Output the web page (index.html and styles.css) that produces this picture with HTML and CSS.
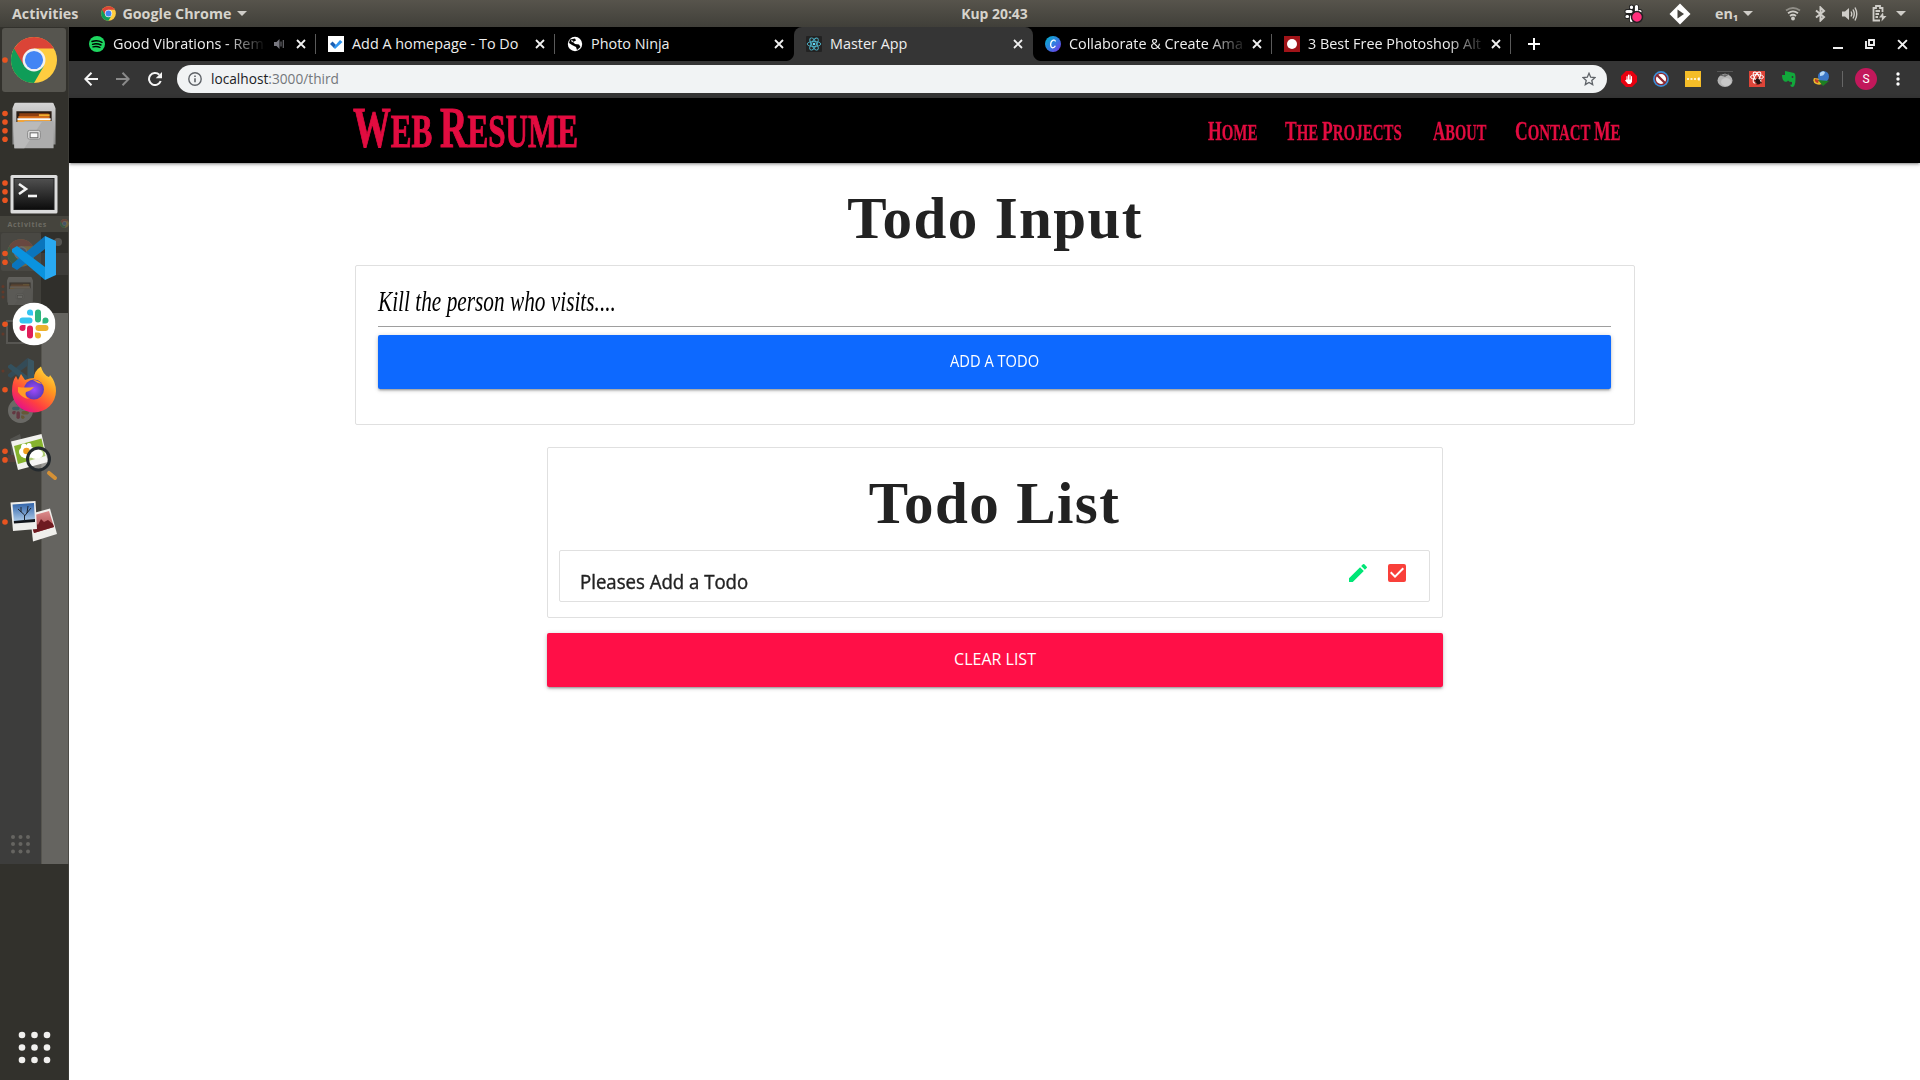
FILE: index.html
```
<!DOCTYPE html>
<html lang="en">
<head>
<meta charset="utf-8">
<title>Master App</title>
<link rel="stylesheet" href="styles.css">
</head>
<body>
<svg class="defs" width="0" height="0">
  <defs>
    <linearGradient id="steel" x1="0" y1="0" x2="0" y2="1"><stop offset="0" stop-color="#d6d6d6"/><stop offset="1" stop-color="#8c8c8c"/></linearGradient>
    <linearGradient id="screen" x1="0" y1="0" x2="0" y2="1"><stop offset="0" stop-color="#505050"/><stop offset="1" stop-color="#0c0c0c"/></linearGradient>
    <linearGradient id="fox" x1="1" y1="0" x2="0.3" y2="1"><stop offset="0" stop-color="#fff44f"/><stop offset=".4" stop-color="#ff9a1f"/><stop offset=".75" stop-color="#ff4040"/><stop offset="1" stop-color="#e5108a"/></linearGradient>
    <radialGradient id="globe"><stop offset="0" stop-color="#a04bff"/><stop offset="1" stop-color="#5b3bbd"/></radialGradient>
    <linearGradient id="sky" x1="0" y1="0" x2="0" y2="1"><stop offset="0" stop-color="#2f62a8"/><stop offset="1" stop-color="#b9d5ee"/></linearGradient>
    <linearGradient id="rose" x1="0" y1="0" x2="0" y2="1"><stop offset="0" stop-color="#dc8c8c"/><stop offset="1" stop-color="#a03c40"/></linearGradient>
    <linearGradient id="canva" x1="0" y1="0" x2="1" y2="1"><stop offset="0" stop-color="#00b4cc"/><stop offset=".5" stop-color="#2f80e0"/><stop offset="1" stop-color="#7d2ae8"/></linearGradient>
    <symbol id="chrome" viewBox="0 0 48 48">
      <circle cx="24" cy="24" r="23.5" fill="#ffcd40"/>
      <path d="M24 24 3.650 12.250A23.500 23.500 0 0 0 24 47.500L34.200 29.900Z" fill="#0f9d58"/>
      <path d="M24 12.300H44.400A23.500 23.500 0 0 0 3.650 12.250L13.800 29.900 24 24Z" fill="#db4437"/>
      <circle cx="24" cy="24" r="11.700" fill="#f1f1f1"/><circle cx="24" cy="24" r="9.300" fill="#4285f4"/>
    </symbol>
    <symbol id="files" viewBox="0 0 44 47">
      <path d="M2 1Q2 0 4 0H40Q42 0 42 1L44 6V43H0V6Z" fill="url(#steel)"/>
      <path d="M4 9H40V22H4Z" fill="#2a1c14"/>
      <path d="M7 11H37V21H7Z" fill="#8f3f10"/><path d="M27 12H38V14H27Z" fill="#f0b030"/><path d="M6 14H38V16H6Z" fill="#d9701c"/><path d="M5 16H39V18H5Z" fill="#fff"/><path d="M5 18H39V21H5Z" fill="#f0a43c"/>
      <path d="M1 20H11L13 19H42V47H2Z" fill="#acacac"/><path d="M1 20H30L12 47H2Z" fill="#bababa"/>
      <rect x="15.500" y="28.500" width="13" height="9" rx="2" fill="#ddd" stroke="#888"/><rect x="18" y="31" width="8" height="5" fill="#fafafa" stroke="#666"/>
    </symbol>
    <symbol id="code" viewBox="0 0 44 44">
      <path d="M33 0 44 5V39L33 44Z" fill="#29a9f2"/><path d="M33 0V13L5 34 0 31V28Z" fill="#0a75bd"/><path d="M33 44V31L5 10 0 13V16Z" fill="#0a93df"/>
    </symbol>
    <symbol id="slack" viewBox="0 0 43 43">
      <circle cx="21.500" cy="21.500" r="21.500" fill="#fff"/>
      <g stroke-width="6" stroke-linecap="round"><path d="M10 18H17" stroke="#36c5f0"/><path d="M25.500 10V17" stroke="#2eb67d"/><path d="M26 25.500H33" stroke="#ecb22e"/><path d="M17.500 26V33" stroke="#e01e5a"/></g>
      <path d="M20.500 13H17.500A3 3 0 1 1 20.500 10Z" fill="#36c5f0"/><path d="M30 21V18A3 3 0 1 1 33 21Z" fill="#2eb67d"/><path d="M22.500 30H25.500A3 3 0 1 1 22.500 33Z" fill="#ecb22e"/><path d="M13 22.500V25.500A3 3 0 1 1 10 22.500Z" fill="#e01e5a"/>
    </symbol>
    <symbol id="x" viewBox="0 0 10 10"><path d="M1 1 9 9M9 1 1 9" fill="none" stroke="#f1f1f1" stroke-width="1.800"/></symbol>
  </defs>
</svg>

<header class="panel">
  <div class="panel-left">
    <span>Activities</span>
    <svg class="panel-chrome" width="15" height="15"><use href="#chrome"/></svg>
    <span class="app-name">Google Chrome</span>
    <i class="caret"></i>
  </div>
  <div class="clock">Kup 20:43</div>
  <div class="panel-right">
    <svg width="20" height="20" viewBox="0 0 20 20"><g stroke="#222" stroke-width="5" stroke-linecap="round"><path d="M3 7.500H7M7.500 3V7M12.500 3V7M13 7.500H16M3 12.500H7M7.500 13V16"/></g><g stroke="#fff" stroke-width="3.200" stroke-linecap="round"><path d="M3 7.500H7M7.500 3V3.500M12.500 2.500V7M15.500 7.500H16M3 12.500H3.500M7.500 12.500V16.500"/></g><circle cx="13" cy="13" r="5.500" fill="#ff2f7c" stroke="#222" stroke-width="1.500"/></svg>
    <svg class="diamond" width="22" height="22" viewBox="0 0 22 22"><path d="M11 .5 21.500 11 11 21.500.500 11Z" fill="#fff"/><path d="M8.500 6.500 15 11 8.500 15.500Z" fill="#45433d"/></svg>
    <span class="lang">en₁</span><i class="caret"></i>
    <svg class="wifi" width="16" height="15" viewBox="0 0 16 15"><g fill="none" stroke="#cfcdc8" stroke-width="1.800"><path d="M1 4.500Q8-.500 15 4.500" opacity=".5"/><path d="M3 7.300Q8 3.500 13 7.300"/><path d="M5 10Q8 7.600 11 10"/></g><circle cx="8" cy="12.500" r="1.900" fill="#cfcdc8"/></svg>
    <svg class="bt" width="11" height="16" viewBox="0 0 11 16"><path d="M1 4.500 9 11 5.500 14.500V1.500L9 5 1 11.500" fill="none" stroke="#cfcdc8" stroke-width="2"/></svg>
    <svg class="vol" width="16" height="14" viewBox="0 0 16 14"><path d="M0 4.500H3L7 1V13L3 9.500H0Z" fill="#cfcdc8"/><path d="M9 4.500Q10.500 7 9 9.500M11 2.500Q13.500 7 11 11.500M13 .500Q16.500 7 13 13.500" fill="none" stroke="#cfcdc8" stroke-width="1.400"/></svg>
    <svg class="battery" width="15" height="17" viewBox="0 0 15 17"><path d="M8 15.500H1.500V3H4V1H8V3H10.500V7M3.500 6H8M3.500 9H7M3.500 12H6" fill="none" stroke="#cfcdc8" stroke-width="1.800"/><path d="M11 7.500 7 12.500H10L9.500 16.500 14.500 11H11.500Z" fill="#cfcdc8"/></svg>
    <i class="caret"></i>
  </div>
</header>

<div class="desktop">
  <aside class="dock">
    <svg class="ghost" width="69" height="648" viewBox="0 216 69 648">
      <path d="M0 216H69V864H0Z" fill="#403f3a"/>
      <path d="M41 232H69V313H41Z" fill="#302f2b"/><path d="M41 253H69V275H41Z" fill="#3d3c39"/>
      <path d="M41 313H69V864H41Z" fill="#656460"/><path d="M0 216H69V232H0Z" fill="#45443d"/>
      <path d="M0 560H41V864H0Z" fill="#3d3d3c"/><path d="M41.500 313V864" stroke="#55544e"/><path d="M68.500 216V864" stroke="#4c4b46"/>
      <rect x="1" y="233" width="40" height="38" rx="2" fill="#494843"/>
      <text x="7.500" y="227" class="ghost-text">Activities</text>
      <g opacity=".22">
        <use href="#chrome" x="60" y="219" width="9" height="9"/><use href="#chrome" x="7" y="239" width="28" height="28"/>
        <circle cx="58" cy="242" r="4" fill="#ddd"/><use href="#files" x="7" y="277" width="26" height="28"/>
        <path d="M7 321H34V343H7Z" fill="#222" stroke="#aaa" stroke-width="2"/>
        <use href="#code" x="8" y="358" width="26" height="26"/><use href="#slack" x="8" y="398" width="25" height="25"/>
        <path d="M10 439 20 434 24 450 12 462Z" fill="#999"/><path d="M8 455H18V462H8Z" fill="#a04040"/>
      </g>
      <g fill="#63392a"><circle cx="3" cy="286.500" r="1.500"/><circle cx="3" cy="292" r="1.500"/><circle cx="3" cy="297" r="1.500"/><circle cx="3" cy="334" r="1.500"/><circle cx="3" cy="371" r="1.500"/></g>
      <g fill="#666561"><circle cx="13" cy="837" r="2"/><circle cx="20.500" cy="837" r="2"/><circle cx="28" cy="837" r="2"/><circle cx="13" cy="844" r="2"/><circle cx="20.500" cy="844" r="2"/><circle cx="28" cy="844" r="2"/><circle cx="13" cy="851.500" r="2"/><circle cx="20.500" cy="851.500" r="2"/><circle cx="28" cy="851.500" r="2"/></g>
    </svg>
    <div class="apps">
      <svg viewBox="0 0 69 65.700"><rect x="2" y="1" width="64" height="64" rx="3" fill="#56554f"/><circle class="run" cx="5" cy="33" r="2.800"/><use href="#chrome" x="10.500" y="9.500" width="47" height="47"/></svg>
      <svg viewBox="0 0 69 65.700"><g class="run"><circle cx="5" cy="20.500" r="2.800"/><circle cx="5" cy="29" r="2.800"/><circle cx="5" cy="37.700" r="2.800"/><circle cx="5" cy="46.300" r="2.800"/></g><use href="#files" x="12" y="9.500" width="44" height="46"/></svg>
      <svg viewBox="0 0 69 65.700"><g class="run"><circle cx="5" cy="25" r="2.800"/><circle cx="5" cy="33.700" r="2.800"/><circle cx="5" cy="42.300" r="2.800"/></g><rect x="10.500" y="17" width="47" height="38.500" rx="1.500" fill="#dcdcdc"/><rect x="14" y="20.500" width="40" height="31" fill="url(#screen)" stroke="#222"/><path d="M19 26 26 31 19 36" fill="none" stroke="#f4f4f4" stroke-width="2.600"/><path d="M28 38H37" stroke="#f4f4f4" stroke-width="2.600"/></svg>
      <svg viewBox="0 0 69 65.700"><g class="run"><circle cx="5" cy="29.500" r="2.800"/><circle cx="5" cy="38.200" r="2.800"/></g><use href="#code" x="12" y="12" width="44" height="44"/></svg>
      <svg viewBox="0 0 69 65.700"><circle class="run" cx="5" cy="34.300" r="2.800"/><use href="#slack" x="12.500" y="12.500" width="43" height="43"/></svg>
      <svg viewBox="0 0 69 65.700"><circle class="run" cx="5" cy="34.800" r="2.800"/><path d="M12 36Q12 26 16 21L18 25 21 19 25 25Q30 23 34 23 34 16 41 11.500 43 20 49 22 50 21 50 20 56 27 56 36A22 21.500 0 0 1 12 36Z" fill="url(#fox)"/><circle cx="34" cy="34.500" r="10" fill="url(#globe)"/><path d="M18 32Q26 33 34 32 31 36 26 37 24 41 29 44 22 43 18 37ZM33 25Q38 25 42 29L38 28Z" fill="#ff9b26"/></svg>
      <svg viewBox="0 0 69 65.700"><g class="run"><circle cx="5" cy="30.300" r="2.800"/><circle cx="5" cy="38.900" r="2.800"/></g><path d="M11 20.500 41.500 13 48 41 18 49Z" fill="#f2f2ee"/><path d="M14 25 41.500 17.500 45.500 35 18 43Z" fill="#86b32d"/><g fill="#fff"><ellipse cx="27" cy="31" rx="8" ry="6.500"/><ellipse cx="24" cy="26" rx="3" ry="3.500"/><ellipse cx="29" cy="25" rx="2.500" ry="3"/><ellipse cx="36" cy="33" rx="7" ry="5"/></g><circle cx="26.500" cy="30" r="3.300" fill="#f0a020"/><path d="M49 52 55 57" stroke="#d59136" stroke-width="4" stroke-linecap="round"/><circle cx="38.500" cy="38" r="11" fill="#fff" fill-opacity=".35" stroke="#242a2e" stroke-width="3"/></svg>
      <svg viewBox="0 0 69 65.700"><circle class="run" cx="5" cy="35" r="2.800"/><path d="M30 27 50 21.500 57 47 33 54.500Z" fill="#f0efec"/><path d="M31 29 49 24 54 40 34 46Z" fill="url(#rose)"/><path d="M32 40 36 36 38 38 41 32 44 35 48 33 53 37 54 40 34 46Z" fill="#6e1a20"/><path d="M10.500 15.500 35.500 14 37 42 13 44Z" fill="#f0efec"/><path d="M12.500 17.500 34 16 35 34 14 36Z" fill="url(#sky)"/><path d="M13.800 34 35 32V35L14 36.500Z" fill="#14171c"/><path d="M24.500 34V28L18 22M24.500 29 31 21M21 25V20M27 26 28 19" fill="none" stroke="#1d2530"/></svg>
    </div>
    <svg class="grid" width="33" height="33" viewBox="0 0 33 33"><g fill="#f1f0ee"><circle cx="4" cy="4" r="3.300"/><circle cx="16.500" cy="4" r="3.300"/><circle cx="29" cy="4" r="3.300"/><circle cx="4" cy="16.500" r="3.300"/><circle cx="16.500" cy="16.500" r="3.300"/><circle cx="29" cy="16.500" r="3.300"/><circle cx="4" cy="29" r="3.300"/><circle cx="16.500" cy="29" r="3.300"/><circle cx="29" cy="29" r="3.300"/></g></svg>
  </aside>

  <div class="browser">
    <div class="tabs">
      <div class="tab">
        <svg class="fav" viewBox="0 0 16 16"><circle cx="8" cy="8" r="8" fill="#1ed760"/><path d="M3 5.500Q8.500 3.800 13 6.300M3.500 8.300Q8 7 12 9M4 10.900Q8 9.800 11 11.500" fill="none" stroke="#000" stroke-width="1.400" stroke-linecap="round"/></svg>
        <span class="title faded">Good Vibrations - Rem</span>
        <svg class="sound" width="11" height="10" viewBox="0 0 11 10"><path d="M0 3H2.500L5.500 0V10L2.500 7H0Z" fill="#77777f"/><path d="M7 2.500V7.500M9.300 1V9" stroke="#66666c" stroke-width="1.200"/></svg>
        <svg class="close"><use href="#x"/></svg>
      </div>
      <div class="tab">
        <svg class="fav" viewBox="0 0 16 16"><path d="M0 0H16V16H0Z" fill="#fff"/><path d="M2 8 4.500 5.500 8 9 6 12Z" fill="#1a5fb4"/><path d="M5.500 11.500 12 4 14.500 6 7 13Z" fill="#2f95f0"/></svg>
        <span class="title">Add A homepage - To Do</span>
        <svg class="close"><use href="#x"/></svg>
      </div>
      <div class="tab before-active">
        <svg class="fav" viewBox="0 0 16 16"><circle cx="8" cy="8" r="7.200" fill="#fff"/><path d="M3 3.500 8 2.500 9 4.500 6 6 8 8 12 8.500 13.500 11 10 14 9 11 5 9 2 7Z" fill="#000"/><path d="M4 4 6.500 5 5 6.500Z" fill="#fff"/></svg>
        <span class="title">Photo Ninja</span>
        <svg class="close"><use href="#x"/></svg>
      </div>
      <div class="tab active">
        <svg class="fav" viewBox="0 0 16 16"><rect width="16" height="16" rx="1" fill="#222"/><g fill="none" stroke="#4fb3c9" stroke-width=".9"><ellipse cx="8" cy="8" rx="6.800" ry="2.600"/><ellipse cx="8" cy="8" rx="6.800" ry="2.600" transform="rotate(60 8 8)"/><ellipse cx="8" cy="8" rx="6.800" ry="2.600" transform="rotate(120 8 8)"/></g><circle cx="8" cy="8" r="1.300" fill="#61dafb"/></svg>
        <span class="title">Master App</span>
        <svg class="close"><use href="#x"/></svg>
      </div>
      <div class="tab after-active">
        <svg class="fav" viewBox="0 0 16 16"><circle cx="8" cy="8" r="8" fill="url(#canva)"/><path d="M10.500 5.500Q10 3.700 8.300 4.200 5.800 5.200 5.600 8.500 5.700 11.600 7.600 11.800 9.400 11.700 10.400 9.800" fill="none" stroke="#fff" stroke-width="1.300"/></svg>
        <span class="title faded">Collaborate &amp; Create Ama</span>
        <svg class="close"><use href="#x"/></svg>
      </div>
      <div class="tab">
        <svg class="fav" viewBox="0 0 16 16"><path d="M0 0H16V16H0Z" fill="#a01318"/><circle cx="8" cy="8" r="5" fill="#fff"/></svg>
        <span class="title faded">3 Best Free Photoshop Alt</span>
        <svg class="close"><use href="#x"/></svg>
      </div>
      <svg class="plus" width="12" height="12" viewBox="0 0 12 12"><path d="M6 0V12M0 6H12" stroke="#fff" stroke-width="2"/></svg>
      <div class="window-buttons">
        <svg width="10" height="10" viewBox="0 0 10 10"><path d="M0 9H10" stroke="#eee" stroke-width="2"/></svg>
        <svg width="10" height="10" viewBox="0 0 10 10"><path d="M4 1H9V6H4ZM1 2V9H8" fill="none" stroke="#eee" stroke-width="1.900"/></svg>
        <svg width="11" height="11"><use href="#x"/></svg>
      </div>
    </div>

    <div class="toolbar">
      <div class="nav-buttons">
        <svg width="14" height="14" viewBox="0 0 14 14"><path d="M14 7H1.500M7.500.800 1.300 7 7.500 13.200" fill="none" stroke="#f5f5f5" stroke-width="2"/></svg>
        <svg width="14" height="14" viewBox="0 0 14 14"><path d="M0 7H12.500M6.500.800 12.700 7 6.500 13.200" fill="none" stroke="#8a8a8a" stroke-width="2"/></svg>
        <svg width="14" height="14" viewBox="0 0 14 14"><path d="M12.700 9A6 6 0 1 1 11.300 2.800" fill="none" stroke="#f5f5f5" stroke-width="2"/><path d="M14 0V6.300H7.700Z" fill="#f5f5f5"/></svg>
      </div>
      <div class="omnibox">
        <svg width="14" height="14" viewBox="0 0 14 14"><circle cx="7" cy="7" r="6.200" fill="none" stroke="#5f6368" stroke-width="1.400"/><path d="M7 6.200V10.300M7 3.500V5" stroke="#5f6368" stroke-width="1.600"/></svg>
        <span class="url">localhost<span class="path">:3000/third</span></span>
        <svg class="star" width="14" height="14" viewBox="0 0 14 14"><path d="M7 1.300 8.700 5.200 13 5.600 9.800 8.400 10.700 12.600 7 10.400 3.300 12.600 4.200 8.400 1 5.600 5.300 5.200Z" fill="none" stroke="#5f6368" stroke-width="1.300"/></svg>
      </div>
      <div class="extensions">
        <svg viewBox="0 0 16 16"><path d="M5 0H11L16 5V11L11 16H5L0 11V5Z" fill="#e8000f"/><path d="M6 5.500V9M7.500 4V9M9 4V9M10.500 5.500V9" stroke="#fff" stroke-width="1.100" stroke-linecap="round"/><path d="M5.500 8.500H11V11L9.500 13H7L4 9.500 4.700 8.900Z" fill="#fff"/></svg>
        <svg viewBox="0 0 16 16"><circle cx="8" cy="8" r="7.900" fill="#3a8fd9"/><circle cx="8" cy="8" r="5.700" fill="#fff" stroke="#8d2730" stroke-width="1.300"/><path d="M4 4 12 12" stroke="#8d2730" stroke-width="2.300"/></svg>
        <svg viewBox="0 0 16 16"><path d="M0 0H16V16H0Z" fill="#f5bd28"/><path d="M2 8H4M5.500 8H7.500M9 8H11M12.500 8H13.500M14 6.500V9.500" stroke="#fff" stroke-width="1.600"/></svg>
        <svg viewBox="0 0 16 16"><ellipse cx="8" cy="9.500" rx="7.500" ry="6.500" fill="#b4b4b4"/><ellipse cx="9" cy="11" rx="5" ry="4" fill="#c8c8c8"/><path d="M3 4 8 5 12 3M8 6V2" stroke="#666" fill="none" stroke-width="1.200"/><path d="M0 .500H16" stroke="#555"/></svg>
        <svg viewBox="0 0 16 16"><path d="M0 0H16V16H0Z" fill="#de4438"/><g fill="none" stroke="#fff"><ellipse cx="8" cy="6" rx="6.500" ry="2.400"/><ellipse cx="8" cy="6.500" rx="6" ry="2.400" transform="rotate(60 8 6.500)"/><ellipse cx="8" cy="6.500" rx="6" ry="2.400" transform="rotate(120 8 6.500)"/></g><ellipse cx="9" cy="10.500" rx="2.200" ry="3.200" fill="#251210" transform="rotate(-35 9 10.500)"/><path d="M5 9 13 12M6 12 12 8M8 14 9 6" stroke="#251210" stroke-width=".8"/></svg>
        <svg viewBox="0 0 16 16"><path d="M4 0V4H1Q1 9 3.500 10.500 6 11.500 7 9.500 8 11 11 11V13.500H9.500Q9 16 12 16 14.500 15 14.500 7 14.500 2.500 13 2 9 1 4 0Z" fill="#12a83b"/><circle cx="11.500" cy="6" r=".9" fill="#353535"/></svg>
        <svg viewBox="0 0 16 16"><path d="M1 7Q-1 11 3 13 8 15 12 11L10 8Z" fill="#e6b82c"/><path d="M2 8Q1 11 5 12L6 9Z" fill="#c33a2c"/><circle cx="10.500" cy="5.500" r="5.500" fill="#3c78c8"/><path d="M7 2Q10-1 12 1.500 11 5 7 5Z" fill="#b7d8f4"/><path d="M5 9 16 10 10 15Z" fill="#1d7f22"/></svg>
      </div>
      <span class="divider"></span>
      <span class="avatar">S</span>
      <svg class="menu" width="4" height="14" viewBox="0 0 4 14"><g fill="#fff"><circle cx="2" cy="2" r="1.700"/><circle cx="2" cy="7" r="1.700"/><circle cx="2" cy="12" r="1.700"/></g></svg>
    </div>

    <div class="page">
      <nav class="site-nav">
        <a class="logo"><span class="squeeze"><b>W</b>eb <b>R</b>esume</span></a>
        <ul>
          <li class="home"><span class="squeeze"><b>H</b>ome</span></li>
          <li class="projects"><span class="squeeze"><b>T</b>he <b>P</b>rojects</span></li>
          <li class="about"><span class="squeeze"><b>A</b>bout</span></li>
          <li class="contact"><span class="squeeze"><b>C</b>ontact <b>M</b>e</span></li>
        </ul>
      </nav>
      <main>
        <h1>Todo Input</h1>
        <section class="card input-card">
          <div class="field"><span class="squeeze">Kill the person who visits....</span></div>
          <div class="btn add"><span>Add a Todo</span></div>
        </section>
        <div class="list">
          <section class="card list-card">
            <h1 class="list-title">Todo List</h1>
            <div class="card item">
              <span class="item-text">Pleases Add a Todo</span>
              <svg width="24" height="24" viewBox="0 0 24 24"><path d="M3 17.250V21h3.750L17.810 9.940l-3.750-3.750L3 17.250zM20.710 7.040a1 1 0 0 0 0-1.410l-2.340-2.340a1 1 0 0 0-1.410 0l-1.830 1.830 3.750 3.750 1.830-1.830z" fill="#00e676"/></svg>
              <svg width="24" height="24" viewBox="0 0 24 24"><path d="M19 3H5a2 2 0 0 0-2 2v14a2 2 0 0 0 2 2h14a2 2 0 0 0 2-2V5a2 2 0 0 0-2-2zm-9 14l-5-5 1.410-1.410L10 14.170l7.590-7.590L19 8l-9 9z" fill="#f9403a"/></svg>
            </div>
          </section>
          <div class="btn clear"><span>Clear List</span></div>
        </div>
      </main>
    </div>
  </div>
</div>
</body>
</html>
```
FILE: styles.css
```
* { box-sizing: border-box; }
body {
  margin: 0;
  width: 1920px;
  height: 1080px;
  overflow: hidden;
  display: flex;
  flex-direction: column;
  font-family: "Open Sans", "Noto Sans", sans-serif;
  background: #fff;
}
svg { display: block; flex: none; }
.defs { position: absolute; }

/* system panel */
.panel {
  flex: none;
  height: 27px;
  display: grid;
  grid-template-columns: 1fr auto 1fr;
  align-items: center;
  background: linear-gradient(#57544c, #403f39);
  color: #d6d3cc;
  font-size: 14.3px;
  font-weight: 700;
  line-height: 27px;
}
.panel-left { display: flex; align-items: center; padding-left: 12px; }
.panel-chrome { margin: 0 6px 0 23px; }
.app-name { margin-right: 6px; }
.clock { font-size: 13.9px; line-height: 25px; padding-left: 69px; }
.panel-right { display: flex; align-items: center; justify-content: flex-end; padding-right: 14px; }
.caret { border: 5px solid transparent; border-top: 5px solid #cfcdc8; border-bottom: 0; flex: none; }
.diamond { margin-left: 25px; }
.lang { margin: 0 5px 0 24px; width: 23px; white-space: nowrap; }
.wifi { margin-left: 32px; }
.bt { margin-left: 14px; }
.vol { margin-left: 16px; }
.battery { margin: 0 9px 0 14px; }

.desktop { flex: 1; display: flex; min-height: 0; }

/* dock */
.dock {
  position: relative;
  width: 69px;
  flex: none;
  display: flex;
  flex-direction: column;
  justify-content: space-between;
  background: #32312c;
  border-right: 1px solid #3d3c37;
}
.ghost { position: absolute; left: 0; top: 189px; }
.ghost-text { font: 700 7px "Open Sans", sans-serif; fill: #6e6c64; letter-spacing: .7px; }
.apps { position: relative; display: flex; flex-direction: column; }
.apps svg { width: 69px; height: 65.7px; }
.run { fill: #e95420; }
.grid { margin: 0 0 16px 17.5px; }

/* browser chrome */
.browser { flex: 1; display: flex; flex-direction: column; min-width: 0; }
.tabs {
  flex: none;
  height: 34px;
  display: flex;
  align-items: center;
  padding-left: 8px;
  background: #000;
}
.tab {
  width: 239px;
  height: 34px;
  flex: none;
  display: flex;
  align-items: center;
  padding: 0 10px 0 12px;
  color: #eee;
  font-size: 14.4px;
  background: linear-gradient(#5a5a5a, #5a5a5a) right center / 1px 20px no-repeat;
}
.tab.before-active {
  background: radial-gradient(circle at 0 0, transparent 7.500px, #353535 8.500px) right bottom / 8px 8px no-repeat;
}
.tab.after-active {
  background:
    radial-gradient(circle at 100% 0, transparent 7.500px, #353535 8.500px) left bottom / 8px 8px no-repeat,
    linear-gradient(#5a5a5a, #5a5a5a) right center / 1px 20px no-repeat;
}
.tab.active {
  background: #353535;
  border-radius: 8px 8px 0 0;
}
.fav { width: 16px; height: 16px; margin-right: 8px; }
.title { flex: 1; white-space: nowrap; line-height: 34px; height: 34px; }
.faded {
  -webkit-mask-image: linear-gradient(90deg, #000 calc(100% - 40px), transparent);
  mask-image: linear-gradient(90deg, #000 calc(100% - 40px), transparent);
  margin-right: 4px;
}
.sound { margin: 0 11px 0 4px; }
.close { width: 10px; height: 10px; }
.plus { margin-left: 17px; }
.window-buttons { margin-left: auto; display: flex; gap: 22px; padding-right: 12px; }

.toolbar {
  flex: none;
  height: 37px;
  display: flex;
  align-items: center;
  padding-bottom: 1px;
  background: #353535;
}
.nav-buttons { display: flex; gap: 18px; margin: 0 15px; }
.omnibox {
  width: 1430px;
  height: 28px;
  border-radius: 14px;
  background: #f1f3f4;
  display: flex;
  align-items: center;
  padding: 0 11px;
}
.url { margin-left: 9px; font-size: 13.7px; line-height: 26px; color: #202124; flex: 1; }
.path { color: #74777b; }
.extensions { display: flex; gap: 16px; margin-left: 14px; }
.extensions svg { width: 16px; height: 16px; }
.divider { width: 1px; height: 16px; background: #666; margin: 0 12px 0 13px; }
.avatar {
  width: 22px; height: 22px; border-radius: 50%;
  background: #c2185b; color: #fff;
  font: 12px/22px Roboto, sans-serif; text-align: center;
}
.menu { margin-left: 19px; }

/* page */
.page { flex: 1; background: #fff; }
.site-nav {
  height: 65px;
  padding: 0 300px 0 284px;
  display: flex;
  justify-content: space-between;
  background: #000;
  color: #e20c40;
  font-family: "Liberation Serif", serif;
  font-weight: 700;
  text-transform: uppercase;
  white-space: nowrap;
  line-height: 65px;
  box-shadow: 0 2px 2px rgba(0,0,0,.14), 0 3px 1px -2px rgba(0,0,0,.12), 0 1px 5px rgba(0,0,0,.2);
}
.site-nav b { line-height: 0; }
.squeeze { display: inline-block; transform-origin: left center; }
.logo { width: 225px; font-size: 46px; padding-top: 1px; -webkit-text-stroke: 1px #e20c40; }
.logo b { font-size: 56px; }
.logo .squeeze { transform: scaleX(.676); }
.site-nav ul { margin: 0; padding: 2px 0 0; list-style: none; display: flex; font-size: 23px; -webkit-text-stroke: .3px #e20c40; }
.site-nav li b { font-size: 27px; }
.site-nav li .squeeze { transform: scaleX(.65); }
.site-nav .about .squeeze { transform: scaleX(.63); }
.home { width: 77px; }
.projects { width: 148px; }
.about { width: 82px; }
.contact { width: 105px; }

main { width: 1280px; margin: 0 0 0 286px; padding-top: 22px; }
h1 {
  margin: 0 0 14px;
  text-align: center;
  font: 700 59px/66px "Liberation Serif", serif;
  letter-spacing: 1.4px;
  color: #222;
}
.card { border: 1px solid #e0e0e0; border-radius: 2px; }
.input-card { height: 160px; padding: 10px 23px 0 22px; }
.field {
  height: 51px;
  border-bottom: 1px solid #9e9e9e;
  font: italic 30px/50px "Liberation Serif", serif;
  color: #000;
  white-space: nowrap;
}
.field .squeeze { transform: scaleX(.71); }
.btn {
  height: 54px;
  border-radius: 2px;
  text-align: center;
  text-transform: uppercase;
  color: #fff;
  font-size: 16px;
  line-height: 52px;
  box-shadow: 0 2px 2px rgba(0,0,0,.14), 0 3px 1px -2px rgba(0,0,0,.12), 0 1px 5px rgba(0,0,0,.2);
}
.btn span { display: inline-block; }
.add { margin-top: 8px; background: #0d69ff; }
.add span { transform: scaleX(.917); }
.list { width: 896px; margin: 22px 0 0 192px; }
.list-card { height: 171px; padding: 22px 12px 0 11px; }
.list-title { margin-bottom: 14px; }
.item {
  height: 52px;
  display: flex;
  gap: 15px;
  padding: 10px 20px 0;
}
.item-text {
  flex: 1;
  font-size: 20px;
  line-height: 41px;
  color: #222;
  -webkit-text-stroke: .4px #222;
  transform: scaleX(.93);
  transform-origin: left center;
}
.clear { margin-top: 15px; background: #ff0f47; }
```
